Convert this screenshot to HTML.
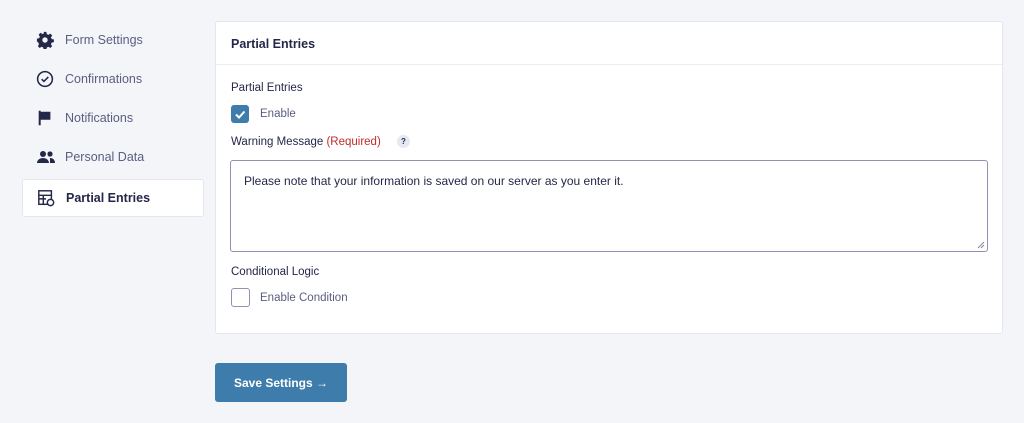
<!DOCTYPE html>
<html><head><style>
body{margin:0;width:1024px;height:423px;background:#f3f5f9;font-family:"Liberation Sans",sans-serif;position:relative;overflow:hidden;color:#242748}
.nav{position:absolute;left:22px;height:38px;width:180px;display:flex;align-items:center;font-size:12.5px;color:#5b5e80}
.nav svg{position:absolute;left:14px}
.nav span{position:absolute;left:43px}
.active{background:#fff;border:1px solid #e4e6ef;border-radius:3px;color:#242748;font-weight:bold}
.panel{position:absolute;left:215px;top:21px;width:786px;height:311px;background:#fff;border:1px solid #e4e6ef;border-radius:3px}
.hd{height:42px;border-bottom:1px solid #ebedf2;font-size:12.5px;font-weight:bold;line-height:44px;padding-left:15px;color:#242748}
.t{position:absolute;font-size:11.5px;color:#242748}
.cb{position:absolute;width:18px;height:18px;border-radius:3px}
</style></head><body>
<div class="nav" style="top:21px"><svg width="18" height="18" viewBox="0 0 20 20"><path fill="#242748" d="M8.5 1h3l.5 2.5 1.8.8 2.1-1.4 2.1 2.1-1.4 2.1.8 1.8 2.5.5v3l-2.5.5-.8 1.8 1.4 2.1-2.1 2.1-2.1-1.4-1.8.8-.5 2.5h-3l-.5-2.5-1.8-.8-2.1 1.4-2.1-2.1 1.4-2.1-.8-1.8L1 11.5v-3l2.5-.5.8-1.8-1.4-2.1 2.1-2.1 2.1 1.4 1.8-.8z"/><circle cx="10" cy="10" r="3" fill="#f3f5f9"/></svg><span>Form Settings</span></div>
<div class="nav" style="top:60px"><svg width="18" height="18" viewBox="0 0 20 20"><circle cx="10" cy="10" r="8.2" fill="none" stroke="#242748" stroke-width="1.7"/><path d="M6.3 10.2l2.5 2.5 4.9-5" fill="none" stroke="#242748" stroke-width="1.7"/></svg><span>Confirmations</span></div>
<div class="nav" style="top:99px"><svg width="18" height="18" viewBox="0 0 20 20"><path fill="#242748" d="M3 2h2.2v16H3zM5 3h11v9H5z"/></svg><span>Notifications</span></div>
<div class="nav" style="top:138px"><svg width="20" height="18" viewBox="0 0 20 18"><circle cx="7" cy="6" r="3" fill="#242748"/><circle cx="14" cy="6" r="2.6" fill="#242748"/><path fill="#242748" d="M1 15c0-3 3-5 6-5s6 2 6 5zM14 10c3 0 5 2 5 5h-5z"/></svg><span>Personal Data</span></div>
<div class="nav active" style="top:179px;height:36px"><svg width="18" height="18" viewBox="0 0 20 20"><rect x="2" y="2" width="14" height="15" fill="none" stroke="#242748" stroke-width="1.6"/><path d="M2 7h14M2 11h8M7 7v10" stroke="#242748" stroke-width="1.6"/><circle cx="15" cy="15" r="3.5" fill="#fff" stroke="#242748" stroke-width="1.6"/></svg><span>Partial Entries</span></div>
<div class="panel"><div class="hd">Partial Entries</div></div>
<div class="t" style="left:231px;top:82px">Partial Entries</div>
<div class="cb" style="left:231px;top:105px;background:#3e7dab"><svg width="18" height="18"><path d="M5 9.5l3 3 5.5-6" fill="none" stroke="#fff" stroke-width="2"/></svg></div>
<div class="t" style="left:260px;top:108px;color:#5b5e80">Enable</div>
<div class="t" style="left:231px;top:136px">Warning Message <span style="color:#c02b2b">(Required)</span></div>
<div style="position:absolute;left:397px;top:135px;width:13px;height:13px;border-radius:50%;background:#e6e8f2;font-size:8px;font-weight:bold;text-align:center;line-height:13px">?</div>
<div style="position:absolute;left:230px;top:160px;width:756px;height:90px;border:1px solid #9092b2;border-radius:3px;background:#fff"><svg style="position:absolute;right:2px;bottom:2px" width="8" height="8"><path d="M7 1L1 7M7 4L4 7" stroke="#888" stroke-width="1"/></svg></div>
<div class="t" style="left:244px;top:174px;font-size:12px">Please note that your information is saved on our server as you enter it.</div>
<div class="t" style="left:231px;top:266px">Conditional Logic</div>
<div class="cb" style="left:231px;top:288px;border:1px solid #9092b2;width:17px;height:17px;background:#fff"></div>
<div class="t" style="left:260px;top:292px;color:#5b5e80">Enable Condition</div>
<div style="position:absolute;left:215px;top:363px;width:132px;height:39px;background:#3e7dab;border-radius:3px;color:#fff;font-size:12px;font-weight:bold;line-height:40px;text-align:center">Save Settings &rarr;</div>
</body></html>
